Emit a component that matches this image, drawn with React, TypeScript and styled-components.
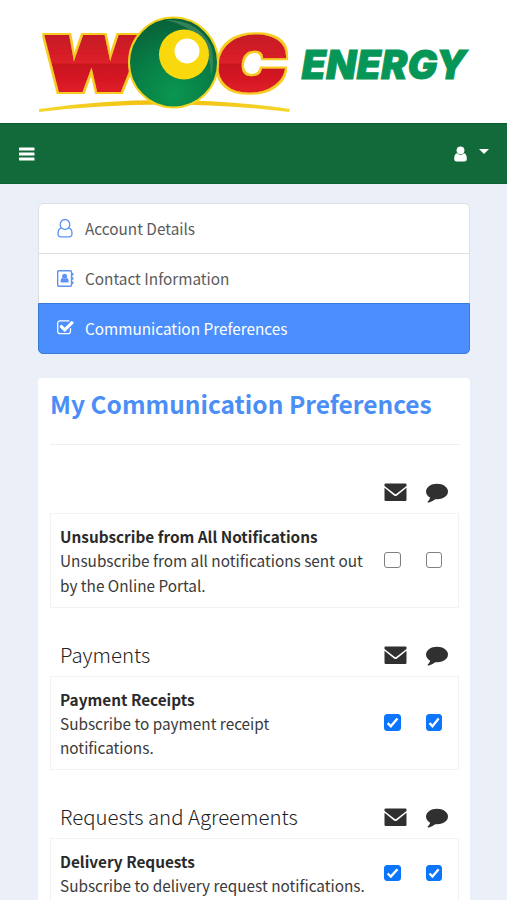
import React, { useState } from "react";
import styled, { createGlobalStyle, css } from "styled-components";

const GlobalStyle = createGlobalStyle`
  *, *::before, *::after { box-sizing: border-box; }
  body {
    margin: 0;
    background: #ebeff7;
    color: #3a3a3a;
    font-family: "Noto Sans CJK SC", "Noto Sans", sans-serif;
    font-size: 15.33px;
    line-height: 24.4px;
  }
`;

const Page = styled.div`
  height: 900px;
  overflow: hidden;
`;

const Brand = styled.header`
  height: 123px;
  background: #fff;
  svg { display: block; }
`;

const NavBar = styled.nav`
  height: 61px;
  padding: 0 18px 0 19px;
  display: flex;
  align-items: center;
  justify-content: space-between;
  background: #126a3a;
  border-top: 1px solid #0a5c30;
  border-bottom: 1px solid #0a6132;
  color: #fff;
`;

const NavButton = styled.button`
  display: flex;
  align-items: center;
  gap: 12px;
  padding: 0;
  border: 0;
  background: none;
  color: inherit;
  svg { display: block; }
`;

const Caret = styled.span`
  border: 5px solid transparent;
  border-top-color: #fff;
  border-bottom: 0;
  margin-bottom: 5px;
`;

const Content = styled.main`
  padding: 19px 37px 0 38px;
`;

const Menu = styled.ul`
  list-style: none;
  margin: 0;
  padding: 0;
  height: 151px;
  border: 1px solid #dcdfe4;
  border-radius: 5px;
  background: #fff;
`;

const MenuItem = styled.li<{ $active?: boolean }>`
  height: 50px;
  display: flex;
  align-items: center;
  gap: 11px;
  padding-left: 18px;
  color: #5b5b5b;
  border-bottom: 1px solid #dcdfe4;
  svg { display: block; color: #5c93f5; }
  ${(p) =>
    p.$active &&
    css`
      height: 51px;
      margin: -1px -1px 0;
      background: #4b8efd;
      border: 1px solid #3a7bd6;
      border-radius: 0 0 5px 5px;
      color: #fff;
      svg { color: #fff; }
    `}
`;

const Card = styled.section`
  margin-top: 24px;
  height: 600px;
  padding: 0 11px 0 12px;
  background: #fff;
  border-radius: 4px;
`;

const Title = styled.h1`
  margin: 0;
  height: 67px;
  padding-top: 8px;
  border-bottom: 1px solid #efefef;
  color: #4b8ef6;
  font-size: 24.5px;
  line-height: 35px;
  font-weight: 700;
  white-space: nowrap;
`;

const Group = styled.section`
  margin-top: 26px;
`;

const GroupHead = styled.div`
  height: 42px;
  padding: 0 11px 0 10px;
  display: flex;
  align-items: center;
  justify-content: space-between;
`;

const GroupName = styled.h2`
  margin: 0;
  padding-bottom: 2px;
  font-size: 20.4px;
  line-height: 30px;
  font-weight: 300;
  color: #222;
  white-space: nowrap;
`;

const Channels = styled.div`
  display: flex;
  gap: 19px;
  color: #303030;
  svg { display: block; }
`;

const Option = styled.div`
  border: 1px solid #f2f2f2;
  padding: 10px 16px 9.3px 9px;
  display: flex;
  align-items: center;
  justify-content: space-between;
`;

const Copy = styled.div`
  width: 305px;
`;

const Name = styled.strong`
  display: block;
  color: #2a2a2a;
  font-weight: 700;
`;

const Checks = styled.div`
  display: flex;
  gap: 25px;
  padding-bottom: 1px;
`;

const Check = styled.input`
  appearance: none;
  display: block;
  width: 16.5px;
  height: 16.5px;
  margin: 0;
  border: 1px solid #808080;
  border-radius: 3px;
  background: #fff;
  &:checked {
    border-color: #0b75fb;
    background: #0b75fb
      url("data:image/svg+xml,%3Csvg xmlns='http://www.w3.org/2000/svg' viewBox='0 0 16 16'%3E%3Cpath d='M3.3 8.4l3 3L12.6 4' fill='none' stroke='white' stroke-width='2.3'/%3E%3C/svg%3E")
      center / 16px no-repeat;
  }
`;

const Logo = () => (
  <svg width="507" height="123" viewBox="0 0 507 123" aria-label="WOC Energy">
    <defs>
      <linearGradient id="red" gradientUnits="userSpaceOnUse" x1="0" y1="-56" x2="0" y2="3">
        <stop offset="0" stopColor="#c41d25" />
        <stop offset=".5" stopColor="#dd2029" />
        <stop offset=".52" stopColor="#c9151f" />
        <stop offset="1" stopColor="#e01c28" />
      </linearGradient>
      <radialGradient id="ball" cx=".5" cy=".85" r=".8">
        <stop offset="0" stopColor="#0a9650" />
        <stop offset=".6" stopColor="#087c45" />
        <stop offset="1" stopColor="#086339" />
      </radialGradient>
      <linearGradient id="swoosh" x1="0" x2="1">
        <stop offset="0" stopColor="#f4d72c" />
        <stop offset=".5" stopColor="#f3bd0e" />
        <stop offset="1" stopColor="#f4d72c" />
      </linearGradient>
      <filter id="outline" x="-10%" y="-10%" width="120%" height="120%">
        <feMorphology in="SourceAlpha" operator="dilate" radius="1.5" result="wide" />
        <feFlood floodColor="#f8cc20" />
        <feComposite in2="wide" operator="in" result="rim" />
        <feMerge>
          <feMergeNode in="rim" />
          <feMergeNode in="SourceGraphic" />
        </feMerge>
      </filter>
    </defs>
    <path d="M39 109Q165 91 290 109L289 112Q165 97 39 112Z" fill="url(#swoosh)" />
    <g fontFamily="Inter, sans-serif" fontWeight="900" fontSize="73" fill="url(#red)" stroke="url(#red)" strokeWidth="4" filter="url(#outline)">
      <text transform="translate(51 89.5) skewX(-4)" x="-9.5" y="0" textLength="97" lengthAdjust="spacingAndGlyphs">W</text>
      <text transform="translate(217 89.5) skewX(-6)" x="-2" y="0" textLength="68" lengthAdjust="spacingAndGlyphs">C</text>
    </g>
    <ellipse cx="173.5" cy="62.5" rx="44.5" ry="45" fill="url(#ball)" stroke="#f5d21e" strokeWidth="2" />
    <path d="M166 20Q197 19 211 46Q215 60 211 77Q211 30 166 20" fill="#4b916c" opacity=".65" />
    <circle cx="184" cy="54.5" r="25" fill="#f9d80d" />
    <circle cx="187" cy="51" r="12.5" fill="#fff" />
    <text x="301.5" y="78.5" textLength="165" lengthAdjust="spacingAndGlyphs" fontFamily="Inter, sans-serif" fontWeight="900" fontStyle="italic" fontSize="39.5" fill="#069657" stroke="#069657" strokeWidth=".8">ENERGY</text>
  </svg>
);

const BarsIcon = () => (
  <svg width="16" height="14" viewBox="0 0 16 14" fill="currentColor">
    <rect y="0.5" width="15.5" height="3" rx=".6" />
    <rect y="5.5" width="15.5" height="3" rx=".6" />
    <rect y="10.5" width="15.5" height="3" rx=".6" />
  </svg>
);

const UserIcon = () => (
  <svg width="13" height="16" viewBox="0 0 13 16" fill="currentColor">
    <circle cx="6.5" cy="4.3" r="3.9" />
    <path d="M3 7.3Q6.5 10.6 10 7.3Q12.8 8 12.8 12.8Q12.8 15.5 10.5 15.5H2.5Q.2 15.5.2 12.8Q.2 8 3 7.3Z" />
  </svg>
);

const UserOutlineIcon = () => (
  <svg width="17" height="20" viewBox="0 0 17 20" fill="none" stroke="currentColor" strokeWidth="1.3">
    <path d="M4.6 8.9A4.8 4.9 0 1 1 11.4 8.9Q15 9.8 15 14.4Q15 17.8 12 17.8H4Q1 17.8 1 14.4Q1 9.8 4.6 8.9Q8 11.8 11.4 8.9" />
  </svg>
);

const AddressIcon = () => (
  <svg width="17" height="18" viewBox="0 0 17 18" fill="currentColor">
    <rect x=".7" y=".7" width="13.8" height="15.6" rx="1.2" fill="none" stroke="currentColor" strokeWidth="1.4" />
    <path d="M15 3h1.4v2.5H15zM15 7.3h1.4v2.5H15zM15 11.5h1.4v2.5H15z" />
    <circle cx="7.6" cy="6.2" r="2.5" />
    <path d="M5.3 7.8Q7.6 9.8 9.9 7.8Q11.7 8.3 11.7 11.3Q11.7 12.5 10.6 12.5H4.6Q3.5 12.5 3.5 11.3Q3.5 8.3 5.3 7.8Z" />
  </svg>
);

const CheckSquareIcon = () => (
  <svg width="17" height="17" viewBox="60 100 1700 1700" fill="currentColor">
    <path d="M1472 930v318q0 119-84.500 203.500t-203.500 84.500h-832q-119 0-203.500-84.500t-84.500-203.500v-832q0-119 84.500-203.500t203.500-84.500h832q63 0 117 25 15 7 18 23 3 17-9 29l-49 49q-10 10-23 10-3 0-9-2-23-6-45-6h-832q-66 0-113 47t-47 113v832q0 66 47 113t113 47h832q66 0 113-47t47-113v-254q0-13 9-22l64-64q10-10 23-10 6 0 12 3 20 8 20 29zm231-489l-814 814q-24 24-57 24t-57-24l-430-430q-24-24-24-57t24-57l110-110q24-24 57-24t57 24l263 263 647-647q24-24 57-24t57 24l110 110q24 24 24 57t-24 57z" />
  </svg>
);

const MailIcon = () => (
  <svg width="23" height="22" viewBox="0 0 23 22" fill="currentColor">
    <path d="M1.5 2.5H21.5Q22.5 2.5 22.5 3.5V5L12.5 12.8Q11.5 13.5 10.5 12.8L.5 5V3.5Q.5 2.5 1.5 2.5Z" />
    <path d="M.5 6.8L10 14.4Q11.5 15.4 13 14.4L22.5 6.8V18.8Q22.5 20 21.3 20H1.7Q.5 20 .5 18.8Z" />
  </svg>
);

const CommentIcon = () => (
  <svg width="22" height="22" viewBox="0 40 1792 1792" fill="currentColor">
    <path d="M1792 896q0 174-120 321.500t-326 233-450 85.500q-70 0-145-8-198 175-460 242-49 14-114 22h-5q-15 0-27-10.500t-16-27.500v-1q-3-4-.5-12t2-10 4.500-9.500l6-9 7-8.500 8-9q7-8 31-34.500t34.500-38 31-39.500 32.500-51 27-59 26-76q-157-89-247.500-220t-90.500-281q0-130 71-248.500t191-204.500 286-136.500 348-50.500 348 50.500 286 136.500 191 204.500 71 248.500z" />
  </svg>
);

const groups = [
  { heading: "", name: "Unsubscribe from All Notifications", text: "Unsubscribe from all notifications sent out by the Online Portal.", on: false },
  { heading: "Payments", name: "Payment Receipts", text: "Subscribe to payment receipt notifications.", on: true },
  { heading: "Requests and Agreements", name: "Delivery Requests", text: "Subscribe to delivery request notifications.", on: true },
];

function Toggle({ initial, label }: { initial: boolean; label: string }) {
  const [on, setOn] = useState(initial);
  return <Check type="checkbox" aria-label={label} checked={on} onChange={() => setOn(!on)} />;
}

export default function App() {
  return (
    <Page>
      <GlobalStyle />
      <Brand><Logo /></Brand>
      <NavBar>
        <NavButton aria-label="Menu"><BarsIcon /></NavButton>
        <NavButton aria-label="Account"><UserIcon /><Caret /></NavButton>
      </NavBar>
      <Content>
        <Menu>
          <MenuItem><UserOutlineIcon />Account Details</MenuItem>
          <MenuItem><AddressIcon />Contact Information</MenuItem>
          <MenuItem $active><CheckSquareIcon />Communication Preferences</MenuItem>
        </Menu>
        <Card>
          <Title>My Communication Preferences</Title>
          {groups.map((g) => (
            <Group key={g.name}>
              <GroupHead>
                <GroupName>{g.heading}</GroupName>
                <Channels><MailIcon /><CommentIcon /></Channels>
              </GroupHead>
              <Option>
                <Copy><Name>{g.name}</Name>{g.text}</Copy>
                <Checks>
                  <Toggle initial={g.on} label={`${g.name} by email`} />
                  <Toggle initial={g.on} label={`${g.name} by text`} />
                </Checks>
              </Option>
            </Group>
          ))}
        </Card>
      </Content>
    </Page>
  );
}
